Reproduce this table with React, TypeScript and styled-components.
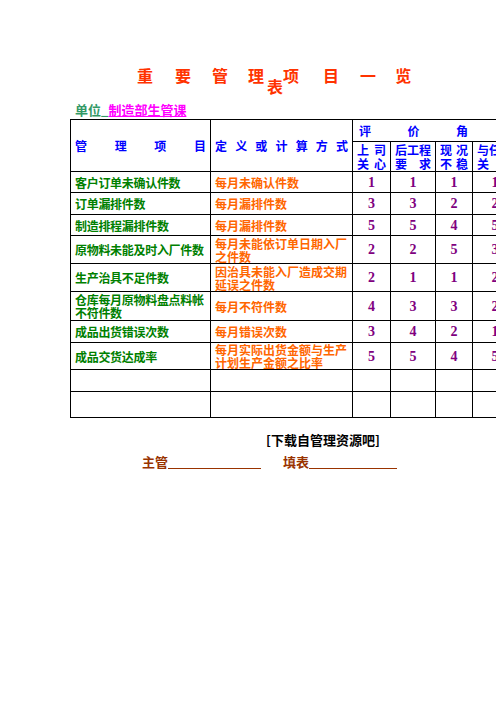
import React from 'react';
import styled, { createGlobalStyle } from 'styled-components';

const GlobalStyle = createGlobalStyle`
  html, body {
    margin: 0;
    padding: 0;
    background: #ffffff;
    overflow: hidden;
  }
  body {
    font-family: 'Noto Sans CJK SC', 'Liberation Sans', sans-serif;
  }
`;

const Page = styled.div`
  width: 447px;
  padding: 67px 0 0 70px;
`;

const TitleRow = styled.div`
  display: flex;
  align-items: flex-start;
  margin-left: 67px;
  height: 28px;
  color: #ff3300;
  font-size: 16px;
  font-weight: 700;
  line-height: 16px;
`;

const TitleChar = styled.span<{ $gap: number; $sub?: boolean }>`
  margin-right: ${p => p.$gap}px;
  margin-top: ${p => (p.$sub ? 11 : 0)}px;
`;

const UnitLine = styled.div`
  margin: 8px 0 2px 5px;
  font-size: 13px;
  font-weight: 700;
  line-height: 14px;
  color: #339966;
`;

const UnitName = styled.span`
  color: #ff00ff;
  text-decoration: underline;
`;

const Table = styled.table`
  border-collapse: collapse;
  table-layout: fixed;
  width: 447px;
  font-size: 12px;
  font-weight: 700;
  line-height: 13px;
`;

const Row = styled.tr<{ $h: number }>`
  height: ${p => p.$h}px;
`;

const Cell = styled.td`
  border: 1px solid #000000;
  padding: 0 4px;
  vertical-align: middle;
  overflow: hidden;
  white-space: normal;
`;

const HeadCell = styled(Cell)`
  color: #0000ff;
  text-align: justify;
  text-align-last: justify;
  line-height: 14px;
`;

const AngleCell = styled(Cell)`
  color: #0000ff;
  padding-left: 6px;
  white-space: nowrap;
  letter-spacing: 36.5px;
`;

const Spread = styled.div`
  text-align: justify;
  text-align-last: justify;
`;

const NameCell = styled(Cell)`
  color: #008000;
  padding: 0 2px 0 4px;
  letter-spacing: -0.3px;
`;

const DefCell = styled(Cell)`
  color: #ff6600;
`;

const ScoreCell = styled(Cell)`
  color: #800080;
  text-align: center;
  font-family: 'Liberation Serif', serif;
  font-size: 14px;
`;

const Note = styled.div`
  margin: 15px 0 0 196px;
  font-size: 13px;
  font-weight: 700;
  line-height: 14px;
  color: #000000;
`;

const SignRow = styled.div`
  display: flex;
  align-items: flex-end;
  gap: 22px;
  margin: 8px 0 0 72px;
  font-size: 13px;
  font-weight: 700;
  line-height: 14px;
  color: #993300;
`;

const SignItem = styled.div`
  display: flex;
  align-items: flex-end;
`;

const Blank = styled.span<{ $w: number }>`
  display: inline-block;
  width: ${p => p.$w}px;
  height: 12px;
  border-bottom: 1px solid #993300;
`;

const title: [string, number, boolean?][] = [
  ['重', 22],
  ['要', 21],
  ['管', 20],
  ['理', 3],
  ['表', 0, true],
  ['项', 24],
  ['目', 21],
  ['一', 19],
  ['览', 0],
];

const rows = [
  { name: '客户订单未确认件数', def: '每月未确认件数', s: [1, 1, 1, 1], h: 21 },
  { name: '订单漏排件数', def: '每月漏排件数', s: [3, 3, 2, 2], h: 22 },
  { name: '制造排程漏排件数', def: '每月漏排件数', s: [5, 5, 4, 5], h: 21 },
  { name: '原物料未能及时入厂件数', def: '每月未能依订单日期入厂之件数', s: [2, 2, 5, 3], h: 28 },
  { name: '生产治具不足件数', def: '因治具未能入厂造成交期延误之件数', s: [2, 1, 1, 2], h: 28 },
  { name: '仓库每月原物料盘点料帐不符件数', def: '每月不符件数', s: [4, 3, 3, 2], h: 29 },
  { name: '成品出货错误次数', def: '每月错误次数', s: [3, 4, 2, 1], h: 22 },
  { name: '成品交货达成率', def: '每月实际出货金额与生产计划生产金额之比率', s: [5, 5, 4, 5], h: 27 },
];

const subHeads = [
  ['上 司', '关 心'],
  ['后工程', '要 求'],
  ['现 况', '不 稳'],
  ['与任务', '关 联'],
];

export default function App() {
  return (
    <>
      <GlobalStyle />
      <Page>
        <TitleRow>
          {title.map(([c, g, sub], i) => (
            <TitleChar key={i} $gap={g} $sub={sub}>
              {c}
            </TitleChar>
          ))}
        </TitleRow>
        <UnitLine>
          单位_<UnitName>制造部生管课</UnitName>
        </UnitLine>
        <Table>
          <colgroup>
            <col style={{ width: 140 }} />
            <col style={{ width: 142 }} />
            <col style={{ width: 38 }} />
            <col style={{ width: 45 }} />
            <col style={{ width: 37 }} />
            <col style={{ width: 45 }} />
          </colgroup>
          <tbody>
            <Row $h={22}>
              <HeadCell rowSpan={2}>管 理 项 目</HeadCell>
              <HeadCell rowSpan={2}>定 义 或 计 算 方 式</HeadCell>
              <AngleCell colSpan={4}>评价角度</AngleCell>
            </Row>
            <Row $h={30}>
              {subHeads.map((lines, i) => (
                <HeadCell key={i}>
                  {lines.map((l, j) => (
                    <Spread key={j}>{l}</Spread>
                  ))}
                </HeadCell>
              ))}
            </Row>
            {rows.map((r, i) => (
              <Row key={i} $h={r.h}>
                <NameCell>{r.name}</NameCell>
                <DefCell>{r.def}</DefCell>
                {r.s.map((v, j) => (
                  <ScoreCell key={j}>{v}</ScoreCell>
                ))}
              </Row>
            ))}
            {[22, 26].map((h, i) => (
              <Row key={`e${i}`} $h={h}>
                {[0, 1, 2, 3, 4, 5].map(j => (
                  <Cell key={j} />
                ))}
              </Row>
            ))}
          </tbody>
        </Table>
        <Note>[下载自管理资源吧]</Note>
        <SignRow>
          <SignItem>
            主管<Blank $w={93} />
          </SignItem>
          <SignItem>
            填表<Blank $w={88} />
          </SignItem>
        </SignRow>
      </Page>
    </>
  );
}
